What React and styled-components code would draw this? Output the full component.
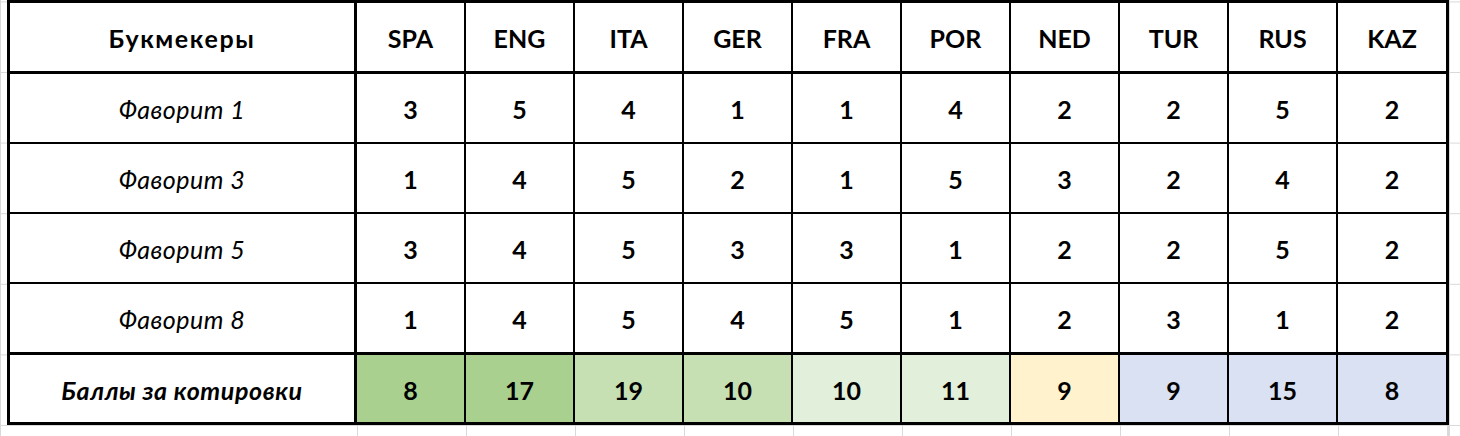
import React from 'react';
import styled, { createGlobalStyle } from 'styled-components';

const GlobalStyle = createGlobalStyle`
  html, body {
    margin: 0;
    padding: 0;
    background: #ffffff;
  }
  * {
    box-sizing: border-box;
  }
`;

const countries = ['SPA', 'ENG', 'ITA', 'GER', 'FRA', 'POR', 'NED', 'TUR', 'RUS', 'KAZ'];

const rows = [
  { name: 'Фаворит 1', values: [3, 5, 4, 1, 1, 4, 2, 2, 5, 2] },
  { name: 'Фаворит 3', values: [1, 4, 5, 2, 1, 5, 3, 2, 4, 2] },
  { name: 'Фаворит 5', values: [3, 4, 5, 3, 3, 1, 2, 2, 5, 2] },
  { name: 'Фаворит 8', values: [1, 4, 5, 4, 5, 1, 2, 3, 1, 2] },
];

const totals = [
  { value: 8, fill: '#a9d08e' },
  { value: 17, fill: '#a9d08e' },
  { value: 19, fill: '#c6e0b4' },
  { value: 10, fill: '#c6e0b4' },
  { value: 10, fill: '#e2efda' },
  { value: 11, fill: '#e2efda' },
  { value: 9, fill: '#fff2cc' },
  { value: 9, fill: '#d9e1f2' },
  { value: 15, fill: '#d9e1f2' },
  { value: 8, fill: '#d9e1f2' },
];

const App = () => {
  const lastRow = rows.length - 1;

  return (
    <>
      <GlobalStyle />
      <Sheet>
        <Table>
          <Cell $first $bottom={3} $spacing={1.6}>Букмекеры</Cell>
          {countries.map((c, i) => (
            <Cell key={c} $last={i === countries.length - 1} $bottom={3}>
              {c}
            </Cell>
          ))}

          {rows.map((row, r) => {
            const bottom = r === lastRow ? 3 : 2;
            return (
              <React.Fragment key={row.name}>
                <Cell $first $italic $regular $bottom={bottom} $spacing={0.5}>
                  {row.name}
                </Cell>
                {row.values.map((v, i) => (
                  <Cell key={i} $last={i === row.values.length - 1} $bottom={bottom}>
                    {v}
                  </Cell>
                ))}
              </React.Fragment>
            );
          })}

          <Cell $first $italic $bottom={0} $spacing={0.6}>Баллы за котировки</Cell>
          {totals.map((t, i) => (
            <Cell key={i} $last={i === totals.length - 1} $bottom={0} $fill={t.fill}>
              {t.value}
            </Cell>
          ))}
        </Table>
      </Sheet>
    </>
  );
};

export default App;

const Sheet = styled.div`
  width: 1460px;
  height: 436px;
  padding-left: 7px;
  overflow: hidden;
  background-color: #ffffff;
  background-image:
    linear-gradient(to right, #d9d9d9 1px, transparent 1px),
    linear-gradient(to right, #d9d9d9 2px, transparent 2px),
    repeating-linear-gradient(to right, #d9d9d9 0 1px, transparent 1px 109px),
    linear-gradient(to bottom, #d9d9d9 1px, transparent 1px);
  background-size: 100% 100%, 100% 100%, 1103px 100%, 100% 70.6px;
  background-position: 0 0, 1448px 0, 357px 0, 0 72px;
  background-repeat: no-repeat, no-repeat, no-repeat, repeat;
`;

const Table = styled.div`
  display: grid;
  box-sizing: content-box;
  width: 1436px;
  grid-template-columns: 347px repeat(9, 109px) 108px;
  grid-template-rows: 71px 70px 70px 70px 71px 67px;
  border: 3px solid #000000;
  background: #ffffff;
  font-family: Lato, 'Noto Sans', 'Liberation Sans', sans-serif;
  color: #000000;
`;

const Cell = styled.div`
  display: flex;
  align-items: center;
  justify-content: center;
  padding-top: 2px;
  font-size: 25px;
  font-weight: ${(p) => (p.$regular ? 400 : 700)};
  font-style: ${(p) => (p.$italic ? 'italic' : 'normal')};
  letter-spacing: ${(p) => p.$spacing || 0}px;
  background: ${(p) => p.$fill || '#ffffff'};
  border-right: ${(p) => (p.$last ? 'none' : p.$first ? '3px solid #000000' : '2px solid #000000')};
  border-bottom: ${(p) => p.$bottom}px solid #000000;
  white-space: nowrap;
`;
